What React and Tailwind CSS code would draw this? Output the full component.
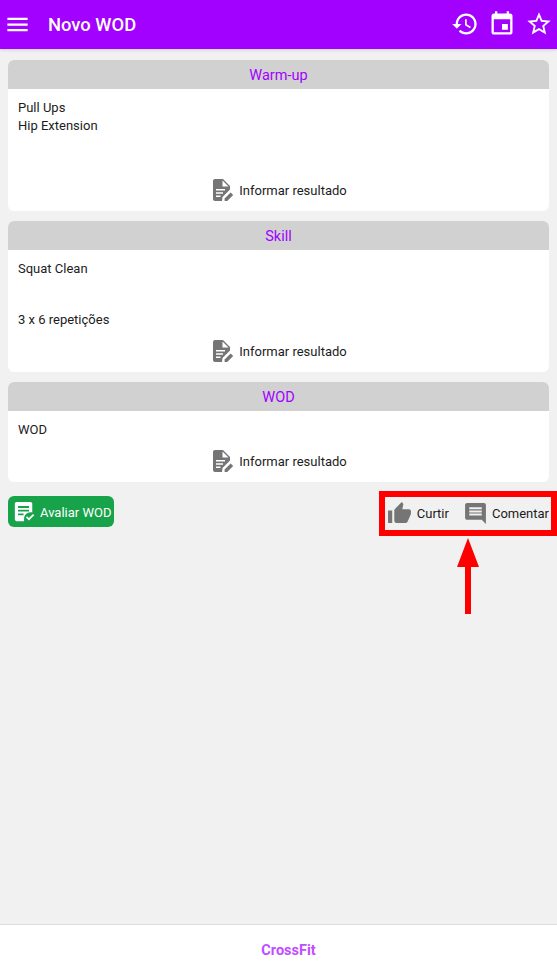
import React from "react";

const roboto = { fontFamily: "Roboto, sans-serif" };

const Icon = ({ d, className }) => (
  <svg viewBox="0 0 24 24" fill="currentColor" className={className}>
    <path d={d} />
  </svg>
);

const MENU = "M3 18h18v-2H3v2zm0-5h18v-2H3v2zm0-7v2h18V6H3z";
const HISTORY =
  "M13 3c-4.97 0-9 4.03-9 9H1l3.89 3.89.07.14L9 12H6c0-3.87 3.13-7 7-7s7 3.13 7 7-3.13 7-7 7c-1.93 0-3.68-.79-4.94-2.06l-1.42 1.42C8.27 19.99 10.51 21 13 21c4.97 0 9-4.03 9-9s-4.03-9-9-9zm-1 5v5l4.28 2.54.72-1.21-3.5-2.08V8H12z";
const EVENT =
  "M17 12h-5v5h5v-5zM16 1v2H8V1H6v2H5c-1.11 0-1.99.9-1.99 2L3 19c0 1.1.89 2 2 2h14c1.1 0 2-.9 2-2V5c0-1.1-.9-2-2-2h-1V1h-2zm3 18H5V8h14v11z";
const STAR =
  "M22 9.24l-7.19-.62L12 2 9.19 8.63 2 9.24l5.46 4.73L5.82 21 12 17.27 18.18 21l-1.63-7.03L22 9.24zM12 15.4l-3.76 2.27 1-4.28-3.32-2.88 4.38-.38L12 6.1l1.71 4.04 4.38.38-3.32 2.88 1 4.28L12 15.4z";
const THUMB =
  "M1 21h4V9H1v12zm22-11c0-1.1-.9-2-2-2h-6.31l.95-4.57.03-.32c0-.41-.17-.79-.44-1.06L14.17 1 7.59 7.59C7.22 7.95 7 8.45 7 9v10c0 1.1.9 2 2 2h9c.83 0 1.54-.5 1.84-1.22l3.02-7.05c.09-.23.14-.47.14-.73v-2z";
const COMMENT =
  "M21.99 4c0-1.1-.89-2-1.99-2H4c-1.1 0-2 .9-2 2v12c0 1.1.9 2 2 2h14l4 4-.01-18zM18 14H6v-2h12v2zm0-3H6V9h12v2zm0-3H6V6h12v2z";

// documento com lapis, nao existe igual nos pacotes
const FileEdit = () => (
  <svg viewBox="0 0 24 24" className="mb-[2px] h-[24px] w-[24px] text-[#757575]" fill="currentColor">
    <path d="M5 1h8l7 7v3.5l-7.5 7.5-.5 4H5c-1.1 0-2-.9-2-2V3c0-1.1.9-2 2-2z" />
    <path d="M12.5 2.5V8.5H18.5z" fill="#ffffff" />
    <path d="M6 11h9v1.6H6zM6 14.2h7v1.6H6zM6 17.4h4.5V19H6z" fill="#ffffff" />
    <path d="M14.6 23v-2.6l6-6 2.6 2.6-6 6z" />
  </svg>
);

const RateIcon = () => (
  <svg viewBox="0 0 24 24" className="h-[22px] w-[22px] text-white" fill="currentColor">
    <path d="M4 1h15c1.1 0 2 .9 2 2v9.5c-3-.8-7 .8-8.5 4-.5 1.5-.6 3.5-.3 5.5H4c-1.1 0-2-.9-2-2V3c0-1.1.9-2 2-2z" />
    <path d="M5.500 5.500h12v2h-12zM5.500 9.500h12v2h-12zM5.500 13.500h6v2h-6z" fill="#16a34a" />
    <path d="M14 18l1.400-1.400 2 2 4.400-4.400L23.200 15.600l-5.800 5.800z" />
  </svg>
);

const Section = ({ title, bodyClass, children }) => (
  <div className="overflow-hidden rounded-[6px] bg-white">
    <div className="flex h-[29px] items-center justify-center bg-[#d1d1d1] pt-[3px] text-[14.5px] text-[#a200ff]">
      {title}
    </div>
    <div className={`px-[10px] pt-[10px] text-[13px] leading-[18px] text-[#1c1c1c] ${bodyClass}`}>{children}</div>
    <div className="flex h-[36px] items-center justify-center gap-[5px] pb-[4px] text-[13px] text-[#1c1c1c]">
      <FileEdit />
      <span>Informar resultado</span>
    </div>
  </div>
);

export default function App() {
  return (
    <div className="flex h-[967px] flex-col bg-[#f1f1f1]" style={roboto}>
      <header className="flex h-[49px] shrink-0 items-center bg-[#a200ff] px-[4px] text-white shadow-[0_1px_3px_rgba(0,0,0,0.15)]">
        <Icon d={MENU} className="h-[27px] w-[27px]" />
        <h1 className="ml-[17px] text-[18.4px] font-medium">Novo WOD</h1>
        <div className="ml-auto flex items-center gap-[9px] pb-[1px]">
          <Icon d={HISTORY} className="h-[28px] w-[28px]" />
          <Icon d={EVENT} className="h-[28px] w-[28px]" />
          <Icon d={STAR} className="h-[28px] w-[28px]" />
        </div>
      </header>

      <main className="flex-1 px-[8px] pt-[11px]">
        <div className="flex flex-col gap-[10px]">
          <Section title="Warm-up" bodyClass="h-[86px]">
            <p>Pull Ups</p>
            <p>Hip Extension</p>
          </Section>
          <Section title="Skill" bodyClass="h-[86px]">
            <p>Squat Clean</p>
            <p className="mt-[33px]">3 x 6 repetições</p>
          </Section>
          <Section title="WOD" bodyClass="h-[35px]">
            <p>WOD</p>
          </Section>
        </div>

        <div className="mt-[14px] flex items-start justify-between">
          <button className="flex h-[31px] w-[106px] items-center gap-[5px] rounded-[6px] bg-[#16a34a] pl-[5px] text-[13px] text-white">
            <RateIcon />
            <span className="pt-[3px]">Avaliar WOD</span>
          </button>

          <div className="relative flex h-[34px] items-center text-[13px] text-[#1c1c1c]">
            <Icon d={THUMB} className="h-[25px] w-[25px] text-[#757575]" />
            <span className="ml-[5px] pt-[1px]">Curtir</span>
            <Icon d={COMMENT} className="ml-[14px] h-[25px] w-[25px] text-[#757575]" />
            <span className="ml-[4px] pt-[1px]">Comentar</span>

            {/* anotacao vermelha */}
            <div className="absolute right-[-8px] top-[-5px] h-[45px] w-[178px] border-[6px] border-[#ff0000]" />
            <svg className="absolute right-[70px] top-[42px]" width="22" height="76" viewBox="0 0 22 76" fill="#ff0000">
              <path d="M11 0L22 29H14V76H8V29H0z" />
            </svg>
          </div>
        </div>
      </main>

      <footer className="flex h-[43px] shrink-0 items-center justify-center border-t border-[#dedede] bg-white pl-[20px] pt-[10px] text-[14.5px] font-bold text-[#c04dff]">
        CrossFit
      </footer>
    </div>
  );
}
